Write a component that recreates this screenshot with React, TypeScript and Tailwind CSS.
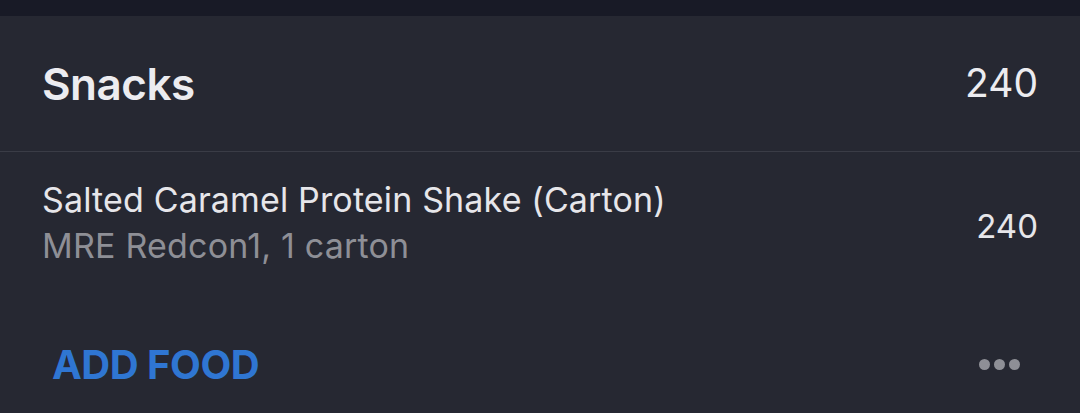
export default function App() {
  return (
    <div className="w-[1080px] h-[413px] bg-[#262832] flex flex-col overflow-hidden font-['Inter',sans-serif]">
      <div className="h-[16px] bg-[#181a26] shrink-0" />

      <div className="h-[136px] flex items-center justify-between pl-[42px] pr-[42px] border-b border-[#3a3c46] shrink-0">
        <h2 className="text-[44px] font-semibold text-[#ececf0] tracking-[-0.5px]">Snacks</h2>
        <span className="text-[39px] text-[#ececf0]">240</span>
      </div>

      <div className="h-[150px] flex items-center justify-between pl-[42px] pr-[42px] shrink-0">
        <div className="flex flex-col mb-[8px]">
          <span className="text-[34px] text-[#e6e6ea] leading-[46px] tracking-[0.15px]">
            Salted Caramel Protein Shake (Carton)
          </span>
          <span className="text-[34px] text-[#8e8f96] leading-[46px] tracking-[0.2px]">
            MRE Redcon1, 1 carton
          </span>
        </div>
        <span className="text-[33px] text-[#e6e6ea]">240</span>
      </div>

      <div className="flex-1 flex items-center justify-between pl-[52px] pr-[60px] pt-[14px]">
        <button className="text-[40px] font-bold text-[#2f76d2] tracking-[-0.5px]">ADD FOOD</button>
        <div className="flex gap-[4px]">
          <span className="w-[11px] h-[11px] rounded-full bg-[#8e8f96]" />
          <span className="w-[11px] h-[11px] rounded-full bg-[#8e8f96]" />
          <span className="w-[11px] h-[11px] rounded-full bg-[#8e8f96]" />
        </div>
      </div>
    </div>
  );
}
